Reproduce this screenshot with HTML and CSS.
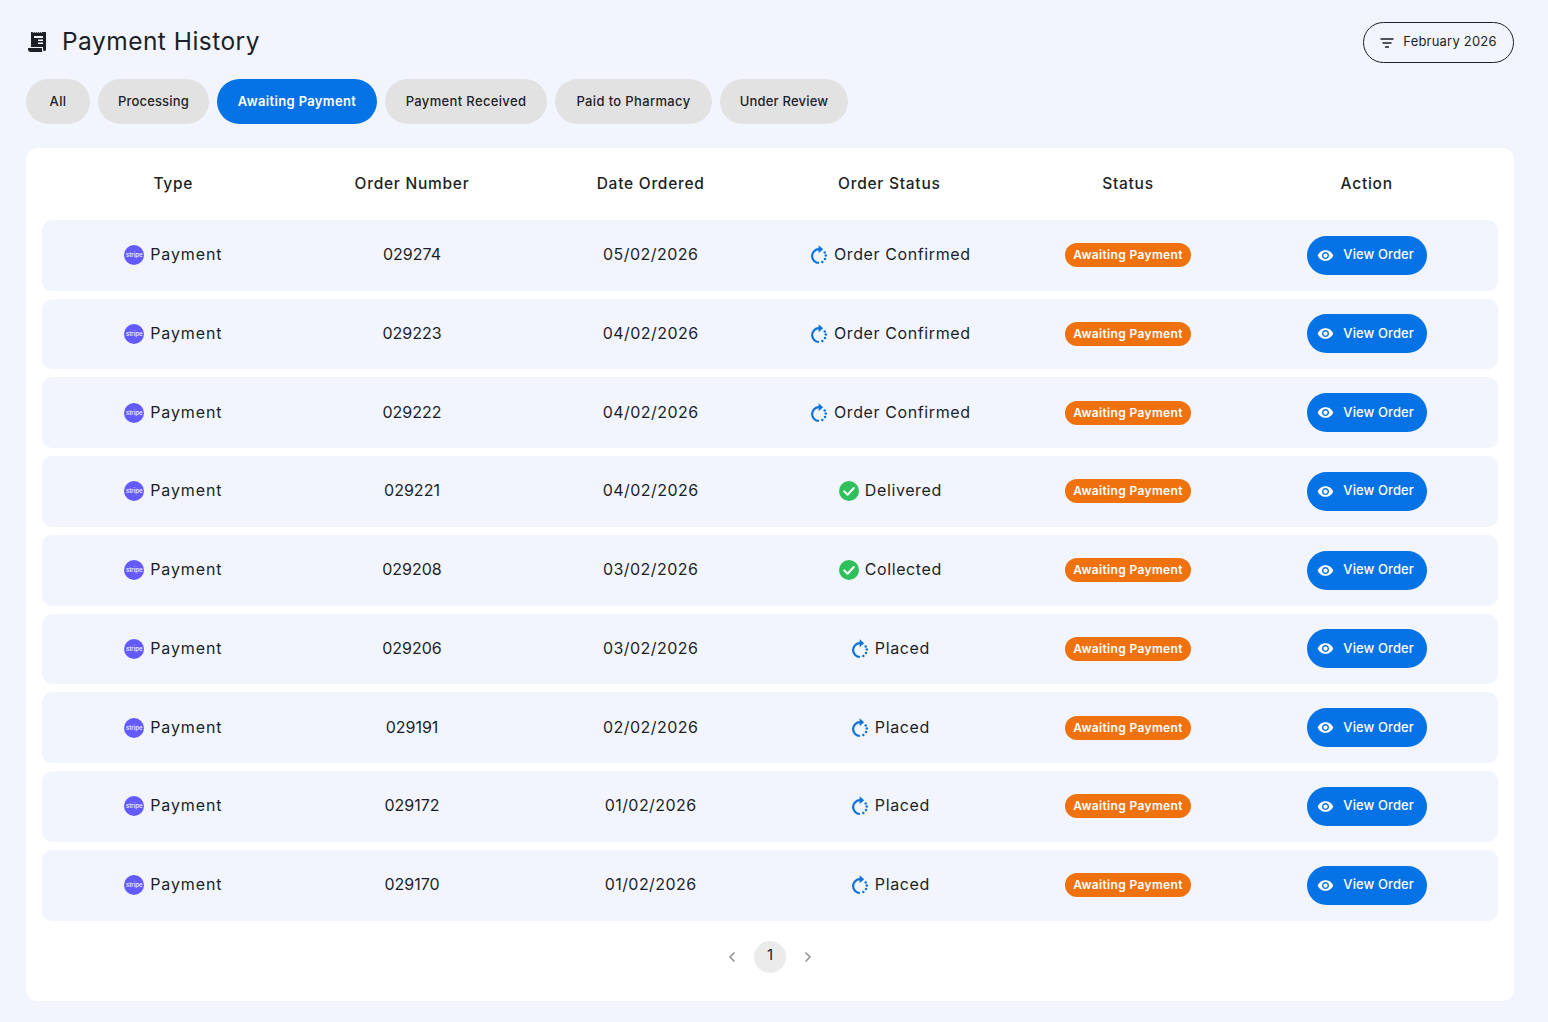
FILE: index.html
```html
<!DOCTYPE html>
<html lang="en">
<head>
<meta charset="utf-8">
<title>Payment History</title>
<link rel="stylesheet" href="styles.css">
</head>
<body>
<svg class="defs" width="0" height="0" aria-hidden="true">
  <symbol id="i-spin" viewBox="0 0 18 20">
    <path d="M9 4.2A6.9 6.9 0 1 0 9 18" fill="none" stroke="currentColor" stroke-width="2.200"/>
    <path d="M8.600 0.200 13.200 4.200 8.600 8.200z" fill="currentColor"/>
    <circle cx="12.300" cy="16.900" r="1.250" fill="currentColor"/>
    <circle cx="15" cy="14" r="1.250" fill="currentColor"/>
    <circle cx="15.800" cy="10.600" r="1.250" fill="currentColor"/>
    <circle cx="14.700" cy="7.400" r="1.250" fill="currentColor"/>
  </symbol>
  <symbol id="i-check" viewBox="0 0 20 20">
    <circle cx="10" cy="10" r="10" fill="#2fbf5b"/>
    <path d="M5.200 10.400 8.600 13.700 14.800 7" fill="none" stroke="#fff" stroke-width="2" stroke-linecap="round" stroke-linejoin="round"/>
  </symbol>
  <symbol id="i-eye" viewBox="0 0 24 24">
    <path fill="currentColor" d="M12 4.5C7 4.5 2.73 7.61 1 12c1.73 4.39 6 7.5 11 7.5s9.27-3.11 11-7.5c-1.73-4.39-6-7.5-11-7.5zM12 17c-2.76 0-5-2.24-5-5s2.24-5 5-5 5 2.24 5 5-2.24 5-5 5zm0-8c-1.66 0-3 1.34-3 3s1.34 3 3 3 3-1.34 3-3-1.34-3-3-3z"/>
  </symbol>
</svg>
<main class="page">
  <header class="top">
    <h1 class="title">
      <svg class="title-icon" viewBox="0 0 20 21" width="20" height="21" aria-hidden="true">
        <path fill="#1b1f27" fill-rule="evenodd" d="M3 1h1.500l1 1 1-1 1 1 1-1 1 1 1-1 1 1 1-1 1 1 1-1H18v17.500a1.500 1.500 0 0 1-3 0V16H3zM6 5v2h9V5zM10 8.500v1.500h5V8.500zM10 11.500V13h5v-1.500z"/>
        <path fill="#1b1f27" d="M0 17h14v2.500c0 .5.100 1 .4 1.500H3a3 3 0 0 1-3-3z"/>
      </svg>
      <span>Payment History</span>
    </h1>
    <button class="month">
      <svg viewBox="0 0 14 10" width="14" height="10" aria-hidden="true"><path d="M0.500 1h13M2.500 5h9M5 9h4" stroke="#1b1f27" stroke-width="1.400" fill="none"/></svg>
      <span class="month-label">February 2026</span>
    </button>
  </header>
  <nav class="tabs">
    <a class="tab t-all">All</a>
    <a class="tab t-proc">Processing</a>
    <a class="tab t-await active">Awaiting Payment</a>
    <a class="tab t-rec">Payment Received</a>
    <a class="tab t-paid">Paid to Pharmacy</a>
    <a class="tab t-rev">Under Review</a>
  </nav>
  <section class="card">
    <div class="head">
      <div>Type</div><div>Order Number</div><div>Date Ordered</div><div>Order Status</div><div>Status</div><div>Action</div>
    </div>

    <div class="row">
      <div class="cell"><span class="stripe">stripe</span>Payment</div><div class="cell">029274</div><div class="cell">05/02/2026</div>
      <div class="cell"><svg class="ic-spin"><use href="#i-spin"/></svg>Order Confirmed</div>
      <div class="cell"><span class="badge">Awaiting Payment</span></div>
      <div class="cell"><a class="view"><svg class="ic-eye"><use href="#i-eye"/></svg>View Order</a></div>
    </div>
    <div class="row">
      <div class="cell"><span class="stripe">stripe</span>Payment</div><div class="cell">029223</div><div class="cell">04/02/2026</div>
      <div class="cell"><svg class="ic-spin"><use href="#i-spin"/></svg>Order Confirmed</div>
      <div class="cell"><span class="badge">Awaiting Payment</span></div>
      <div class="cell"><a class="view"><svg class="ic-eye"><use href="#i-eye"/></svg>View Order</a></div>
    </div>
    <div class="row">
      <div class="cell"><span class="stripe">stripe</span>Payment</div><div class="cell">029222</div><div class="cell">04/02/2026</div>
      <div class="cell"><svg class="ic-spin"><use href="#i-spin"/></svg>Order Confirmed</div>
      <div class="cell"><span class="badge">Awaiting Payment</span></div>
      <div class="cell"><a class="view"><svg class="ic-eye"><use href="#i-eye"/></svg>View Order</a></div>
    </div>
    <div class="row">
      <div class="cell"><span class="stripe">stripe</span>Payment</div><div class="cell">029221</div><div class="cell">04/02/2026</div>
      <div class="cell"><svg class="ic-check"><use href="#i-check"/></svg>Delivered</div>
      <div class="cell"><span class="badge">Awaiting Payment</span></div>
      <div class="cell"><a class="view"><svg class="ic-eye"><use href="#i-eye"/></svg>View Order</a></div>
    </div>
    <div class="row">
      <div class="cell"><span class="stripe">stripe</span>Payment</div><div class="cell">029208</div><div class="cell">03/02/2026</div>
      <div class="cell"><svg class="ic-check"><use href="#i-check"/></svg>Collected</div>
      <div class="cell"><span class="badge">Awaiting Payment</span></div>
      <div class="cell"><a class="view"><svg class="ic-eye"><use href="#i-eye"/></svg>View Order</a></div>
    </div>
    <div class="row">
      <div class="cell"><span class="stripe">stripe</span>Payment</div><div class="cell">029206</div><div class="cell">03/02/2026</div>
      <div class="cell"><svg class="ic-spin"><use href="#i-spin"/></svg>Placed</div>
      <div class="cell"><span class="badge">Awaiting Payment</span></div>
      <div class="cell"><a class="view"><svg class="ic-eye"><use href="#i-eye"/></svg>View Order</a></div>
    </div>
    <div class="row">
      <div class="cell"><span class="stripe">stripe</span>Payment</div><div class="cell">029191</div><div class="cell">02/02/2026</div>
      <div class="cell"><svg class="ic-spin"><use href="#i-spin"/></svg>Placed</div>
      <div class="cell"><span class="badge">Awaiting Payment</span></div>
      <div class="cell"><a class="view"><svg class="ic-eye"><use href="#i-eye"/></svg>View Order</a></div>
    </div>
    <div class="row">
      <div class="cell"><span class="stripe">stripe</span>Payment</div><div class="cell">029172</div><div class="cell">01/02/2026</div>
      <div class="cell"><svg class="ic-spin"><use href="#i-spin"/></svg>Placed</div>
      <div class="cell"><span class="badge">Awaiting Payment</span></div>
      <div class="cell"><a class="view"><svg class="ic-eye"><use href="#i-eye"/></svg>View Order</a></div>
    </div>
    <div class="row">
      <div class="cell"><span class="stripe">stripe</span>Payment</div><div class="cell">029170</div><div class="cell">01/02/2026</div>
      <div class="cell"><svg class="ic-spin"><use href="#i-spin"/></svg>Placed</div>
      <div class="cell"><span class="badge">Awaiting Payment</span></div>
      <div class="cell"><a class="view"><svg class="ic-eye"><use href="#i-eye"/></svg>View Order</a></div>
    </div>

    <div class="pager">
      <svg viewBox="0 0 8 12" width="8" height="12" aria-hidden="true"><path d="M6.500 1.500 2 6l4.500 4.500" fill="none" stroke="#8f9296" stroke-width="1.500"/></svg>
      <span class="page-num">1</span>
      <svg viewBox="0 0 8 12" width="8" height="12" aria-hidden="true"><path d="M1.500 1.500 6 6l-4.500 4.500" fill="none" stroke="#8f9296" stroke-width="1.500"/></svg>
    </div>
  </section>
</main>
</body>
</html>
```
FILE: styles.css
```css
* { box-sizing: border-box; }
html, body { margin: 0; padding: 0; }
body {
  background: #f2f5fd;
  color: #1b1f27;
  font-family: Inter, "Open Sans", sans-serif;
  height: 1022px;
  overflow: hidden;
}
.defs { position: absolute; }
.page { padding: 22px 34px 0 26px; }
.top {
  display: flex;
  justify-content: space-between;
  align-items: flex-start;
  height: 41px;
}
.title {
  display: flex;
  align-items: center;
  gap: 14px;
  margin: 0;
  height: 41px;
  padding: 0 0 4px 2px;
  font-size: 24.5px;
  font-weight: 400;
  letter-spacing: 0.47px;
  color: #1b1f27;
}
.title-icon { flex: none; margin-top: 2px; }
.month {
  display: flex;
  align-items: center;
  justify-content: center;
  gap: 9px;
  width: 151px;
  height: 41px;
  background: transparent;
  border: 1px solid #1b1f27;
  border-radius: 21px;
  font: 400 13px Inter, sans-serif;
  letter-spacing: 0.2px;
  color: #1b1f27;
  padding: 0;
}
.month-label { margin-bottom: 4px; }
.tabs {
  display: flex;
  gap: 8px;
  margin-top: 16px;
}
.tab {
  display: flex;
  align-items: center;
  justify-content: center;
  height: 45px;
  padding-bottom: 2px;
  border-radius: 23px;
  background: #e2e2e2;
  color: #1f2228;
  font-size: 13px;
  font-weight: 500;
  letter-spacing: 0.35px;
}
.t-all { width: 64px; }
.t-proc { width: 111px; letter-spacing: 0.15px; }
.t-await { width: 160px; }
.t-rec { width: 162px; }
.t-paid { width: 157px; }
.t-rev { width: 128px; letter-spacing: 0.2px; }
.tab.active { background: #0573e6; color: #fff; font-weight: 600; }
.card {
  margin-top: 24px;
  height: 853px;
  background: #fff;
  border-radius: 12px;
  padding: 16px;
}
.head, .row {
  display: grid;
  grid-template-columns: repeat(6, 1fr);
  padding: 0 12px;
  align-items: center;
  text-align: center;
}
.head {
  height: 38px;
  margin-bottom: 17.8px;
  font-size: 15.5px;
  font-weight: 500;
  letter-spacing: 0.75px;
}
.row {
  height: 70.75px;
  margin-bottom: 8px;
  background: #f2f5fd;
  border-radius: 10px;
  font-size: 16px;
}
.cell {
  display: flex;
  align-items: center;
  justify-content: center;
  gap: 6px;
}
.cell:nth-child(-n+4) { padding-bottom: 2px; }
.cell:nth-child(1) { letter-spacing: 0.87px; }
.cell:nth-child(2) { letter-spacing: 0; }
.cell:nth-child(3) { letter-spacing: 0.45px; }
.cell:nth-child(4) { letter-spacing: 0.6px; padding-left: 2px; }
.stripe {
  flex: none;
  width: 20px;
  height: 20px;
  margin-top: 2px;
  border-radius: 50%;
  background: #635bff;
  color: #e8e7ff;
  font-size: 6px;
  font-weight: 600;
  letter-spacing: 0;
  line-height: 20px;
  text-align: center;
}
.ic-spin { width: 18px; height: 20px; margin-top: 2px; color: #0f73dc; flex: none; }
.ic-check { width: 20px; height: 20px; margin-top: 2px; flex: none; }
.badge {
  display: block;
  height: 24px;
  width: 126px;
  line-height: 24px;
  border-radius: 12px;
  background: #f0720f;
  color: #fff;
  font-size: 12px;
  font-weight: 600;
  letter-spacing: 0.35px;
  text-align: center;
}
.view {
  display: flex;
  align-items: center;
  justify-content: center;
  gap: 9px;
  width: 120px;
  height: 39px;
  padding: 0 2px 2px 0;
  border-radius: 20px;
  background: #0573e6;
  color: #fff;
  font-size: 13px;
  font-weight: 500;
  letter-spacing: 0.1px;
}
.ic-eye { width: 17px; height: 17px; flex: none; margin-top: 2px; }
.pager {
  display: flex;
  justify-content: center;
  align-items: center;
  gap: 18px;
  margin-top: 20.2px;
}
.page-num {
  width: 32px;
  height: 32px;
  line-height: 28px;
  border-radius: 50%;
  background: #ebebeb;
  text-align: center;
  font-size: 15px;
  color: #1b1f27;
}
```
